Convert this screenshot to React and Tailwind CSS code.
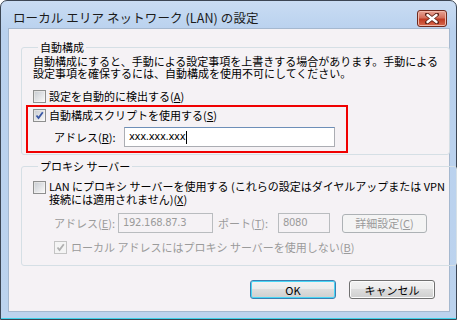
import React from 'react';

const font = { fontFamily: '"Noto Sans CJK JP", "Noto Sans", sans-serif' };

function CheckBox({ checked, disabled }) {
  return (
    <span
      className={`w-[13px] h-[13px] shrink-0 border flex items-center justify-center ${
        disabled ? 'border-[#c4c4c4] bg-[#f4f4f4]' : 'border-[#8e8f8f] bg-gradient-to-br from-[#dcdcdc] to-[#fbfbfb]'
      }`}
    >
      <span className={`w-[9px] h-[9px] flex items-center justify-center ${disabled ? 'bg-[#f4f4f4]' : 'bg-gradient-to-br from-[#cbcfd5] to-[#f6f6f6]'}`}>
        {checked && (
          <svg width="9" height="9" viewBox="0 0 9 9">
            <path d="M1.5 4.5 L3.5 7 L7.8 1.2" fill="none" stroke={disabled ? '#b0b0b0' : '#3a58a6'} strokeWidth="1.8" />
          </svg>
        )}
      </span>
    </span>
  );
}

function Field({ value, disabled, width, caret }) {
  return (
    <div
      className={`h-[20px] ${width} border flex items-center pl-[4px] ${
        disabled ? 'border-[#b9bcbf] bg-[#f5f2f5] text-[#9b9b9b]' : 'border-[#abadb3] border-t-[#6d8fb8] bg-white text-black'
      }`}
      style={{ fontFamily: '"DejaVu Sans", "Liberation Sans", sans-serif' }}
    >
      <span className="text-[10px] leading-[12px] tracking-[-0.3px]">{value}</span>
      {caret && <span className="w-px h-[13px] bg-black ml-[1px]" />}
    </div>
  );
}

function Button({ children, primary, disabled, width }) {
  return (
    <div
      className={`${width} h-[19px] rounded-[3px] border flex items-center justify-center text-[11px] leading-[12px] ${
        disabled
          ? 'border-[#adb2b5] bg-[#f4f4f4] text-[#9a9a9a]'
          : primary
          ? 'border-[#3c7fb1] text-black bg-[linear-gradient(#f2f2f2,#ebebeb_50%,#dddddd_50%,#cfcfcf)] shadow-[inset_0_0_0_1px_#48d6f6]'
          : 'border-[#707070] text-black bg-[linear-gradient(#f2f2f2,#ebebeb_50%,#dddddd_50%,#cfcfcf)] shadow-[inset_0_0_0_1px_#fcfcfc]'
      }`}
    >
      {children}
    </div>
  );
}

export default function App() {
  return (
    <div className="w-[457px] h-[320px] overflow-hidden bg-white" style={font}>
      <div className="w-[457px] h-[320px] rounded-t-[7px] border border-[#3c4654] bg-[linear-gradient(#c9dcf3,#b9d1ee_30px,#bcd3ee)] flex flex-col">
        {/* Title bar */}
        <div className="h-[27px] flex items-start shrink-0">
          <span className="ml-[12px] mt-[10px] text-[12.5px] leading-[14px] text-[#1b1b1b] tracking-[0.1px]">
            ローカル エリア ネットワーク (LAN) の設定
          </span>
          <div className="ml-auto mr-[9px] mt-[9px] w-[30px] h-[17px] rounded-[3px] border border-[#6f2a1e] bg-[linear-gradient(#e8a496,#d46f5c_45%,#bf3a22_55%,#d86a4f)] shadow-[inset_0_0_0_1px_#f0b8aa] flex items-center justify-center">
            <svg width="14" height="11" viewBox="0 0 14 11">
              <path d="M2 1.5 L12 9.5 M12 1.5 L2 9.5" stroke="#5a2015" strokeWidth="4" strokeLinecap="round" />
              <path d="M2.5 2 L11.5 9 M11.5 2 L2.5 9" stroke="#ffffff" strokeWidth="2.4" strokeLinecap="round" />
            </svg>
          </div>
        </div>

        {/* Client area */}
        <div className="ml-[7px] w-[442px] h-[284px] bg-[#f5f2f5] border border-[#a5b8cf] flex flex-col text-[11px] leading-[12px] text-black">
          {/* 自動構成 */}
          <fieldset className="ml-[12px] mt-[12px] w-[415px] border border-[#d5dfe5] rounded-[3px] px-[11px] pt-[2px] pb-[1px]">
            <legend className="ml-[5px] px-[2px]">自動構成</legend>
            <p className="whitespace-nowrap">
              自動構成にすると、手動による設定事項を上書きする場合があります。手動による
              <br />
              設定事項を確保するには、自動構成を使用不可にしてください。
            </p>
            <div className="mt-[11px] flex items-center gap-[3px] h-[12px]">
              <CheckBox />
              <span>
                設定を自動的に検出する(<u>A</u>)
              </span>
            </div>
            <div className="mt-[3px] -ml-[7px] w-[322px] border-2 border-[#f00000] pl-[5px] pt-[2px] pb-[4px]">
              <div className="flex items-center gap-[3px] h-[12px]">
                <CheckBox checked />
                <span>
                  自動構成スクリプトを使用する(<u>S</u>)
                </span>
              </div>
              <div className="mt-[6px] pl-[21px] flex items-center">
                <span className="w-[70px]">
                  アドレス(<u>R</u>):
                </span>
                <Field value="xxx.xxx.xxx" width="w-[211px]" caret />
              </div>
            </div>
          </fieldset>

          {/* プロキシ サーバー */}
          <fieldset className="ml-[12px] mt-[5px] w-[415px] border border-[#d5dfe5] rounded-[3px] px-[11px] pt-[9px] pb-[12px]">
            <legend className="ml-[5px] px-[2px]">プロキシ サーバー</legend>
            <div className="flex items-start gap-[3px]">
              <CheckBox />
              <span className="whitespace-nowrap leading-[13px] -mt-[1px]">
                LAN にプロキシ サーバーを使用する (これらの設定はダイヤルアップまたは VPN
                <br />
                接続には適用されません)(<u>X</u>)
              </span>
            </div>
            <div className="mt-[7px] pl-[21px] flex items-center text-[#9b9b9b]">
              <span className="w-[64px]">
                アドレス(<u>E</u>):
              </span>
              <Field value="192.168.87.3" width="w-[95px]" disabled />
              <span className="ml-[5px] w-[60px]">
                ポート(<u>T</u>):
              </span>
              <Field value="8080" width="w-[52px]" disabled />
              <div className="ml-[12px]">
                <Button disabled width="w-[85px]">
                  詳細設定(<u>C</u>)
                </Button>
              </div>
            </div>
            <div className="mt-[8px] pl-[21px] flex items-center gap-[4px] h-[12px] text-[#9b9b9b]">
              <CheckBox checked disabled />
              <span>
                ローカル アドレスにはプロキシ サーバーを使用しない(<u>B</u>)
              </span>
            </div>
          </fieldset>

          {/* Buttons */}
          <div className="mt-[14px] flex justify-end gap-[13px] pr-[14px]">
            <Button primary width="w-[86px]">
              OK
            </Button>
            <Button width="w-[86px]">キャンセル</Button>
          </div>
        </div>
        <div className="mt-auto h-px bg-[#3ed2ea]" />
      </div>
    </div>
  );
}
